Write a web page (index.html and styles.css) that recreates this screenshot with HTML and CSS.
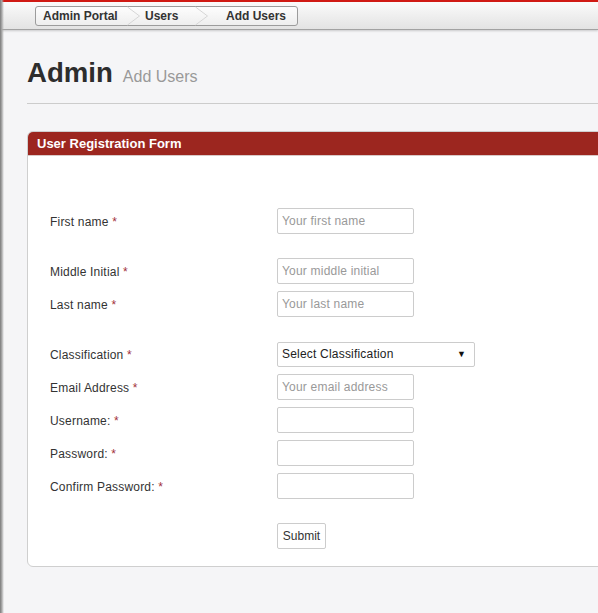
FILE: index.html
```html
<!DOCTYPE html>
<html lang="en">
<head>
<meta charset="utf-8">
<title>Admin - Add Users</title>
<link rel="stylesheet" href="styles.css">
</head>
<body>
<div class="page">
  <header class="topbar">
    <nav class="crumbs">
      <span class="crumb crumb--home">Admin Portal</span>
      <svg class="sep" width="13" height="20" viewBox="0 0 13 20"><polyline points="0.5,1 12.5,10 0.5,19" fill="none" stroke="#d6d6d6" stroke-width="1"/></svg>
      <span class="crumb crumb--users">Users</span>
      <svg class="sep sep--wide" width="13" height="20" viewBox="0 0 13 20"><polyline points="0.5,1 12.5,10 0.5,19" fill="none" stroke="#d6d6d6" stroke-width="1"/></svg>
      <span class="crumb">Add Users</span>
    </nav>
  </header>
  <main class="content">
    <div class="title">
      <h1 class="title-main">Admin</h1>
      <span class="title-sub">Add Users</span>
    </div>
    <hr class="rule">
    <section class="panel">
      <h2 class="panel-head">User Registration Form</h2>
      <form class="panel-body">
        <div class="row row--spaced">
          <label class="label">First name <span class="req">*</span></label>
          <input class="field" type="text" placeholder="Your first name">
        </div>
        <div class="row">
          <label class="label">Middle Initial <span class="req">*</span></label>
          <input class="field" type="text" placeholder="Your middle initial">
        </div>
        <div class="row row--spaced">
          <label class="label">Last name <span class="req">*</span></label>
          <input class="field" type="text" placeholder="Your last name">
        </div>
        <div class="row">
          <label class="label">Classification <span class="req">*</span></label>
          <div class="select">
            <span class="select-text">Select Classification</span>
            <span class="select-arrow">▼</span>
          </div>
        </div>
        <div class="row">
          <label class="label">Email Address <span class="req">*</span></label>
          <input class="field" type="text" placeholder="Your email address">
        </div>
        <div class="row">
          <label class="label">Username: <span class="req">*</span></label>
          <input class="field" type="text">
        </div>
        <div class="row">
          <label class="label">Password: <span class="req">*</span></label>
          <input class="field" type="password">
        </div>
        <div class="row row--spaced">
          <label class="label">Confirm Password: <span class="req">*</span></label>
          <input class="field" type="password">
        </div>
        <div class="row row--last">
          <span class="label"></span>
          <button class="submit" type="button">Submit</button>
        </div>
      </form>
    </section>
  </main>
</div>
</body>
</html>
```

FILE: styles.css
```css
html, body {
  margin: 0;
  padding: 0;
  height: 100%;
}
body {
  background: #f5f5f7;
  font-family: "Liberation Sans", Arial, sans-serif;
  color: #333;
  overflow: hidden;
}
.page {
  position: relative;
  min-height: 100%;
  overflow: hidden;
}
.page::before {
  content: "";
  position: absolute;
  left: 0;
  top: 0;
  bottom: 0;
  width: 4px;
  background: linear-gradient(to right, #7a7a7a, #a9a9a9 45%, rgba(200,200,200,0));
  z-index: 5;
}
.topbar {
  box-sizing: content-box;
  height: 23px;
  padding-top: 4px;
  border-top: 2px solid #d01a14;
  border-bottom: 1px solid #a2a2a2;
  background: linear-gradient(#fbfbfb, #e3e3e3);
  box-shadow: 0 1px 2px rgba(0,0,0,0.18);
}
.crumbs {
  display: inline-flex;
  align-items: center;
  margin-left: 35px;
  height: 18px;
  padding: 0 11px 0 7px;
  border: 1px solid #9c9c9c;
  border-radius: 3px;
  background: linear-gradient(#fdfdfd, #eeeeee);
  font-size: 12px;
  font-weight: bold;
  color: #333;
}
.crumb {
  line-height: 18px;
}
.crumb--home {
  width: 84px;
}
.crumb--users {
  width: 50px;
}
.sep {
  display: block;
  flex: none;
  margin-right: 5px;
}
.sep--wide {
  margin-right: 18px;
}
.content {
  padding: 27px 0 0 27px;
}
.title {
  display: flex;
  align-items: baseline;
  gap: 10px;
  height: 31px;
}
.title-main {
  margin: 0;
  font-size: 27.6px;
  line-height: 31px;
  font-weight: bold;
  color: #2d2d2d;
}
.title-sub {
  font-size: 16px;
  color: #999;
}
.rule {
  margin: 15px 0 0 0;
  border: 0;
  border-top: 1px solid #cccccc;
  height: 0;
}
.panel {
  margin-top: 27px;
  width: 660px;
  border: 1px solid #cfcfcf;
  border-radius: 6px;
  background: #fff;
  overflow: hidden;
}
.panel-head {
  margin: 0;
  height: 23px;
  line-height: 23px;
  padding-left: 9px;
  background: #9c261f;
  border-bottom: 1px solid #d9c9c7;
  color: #fff;
  font-size: 13px;
  font-weight: bold;
}
.panel-body {
  display: flex;
  flex-direction: column;
  gap: 7px;
  padding: 52px 0 17px 22px;
  margin: 0;
}
.row {
  display: flex;
  align-items: center;
  height: 26px;
}
.row--spaced {
  margin-bottom: 17px;
}
.label {
  width: 227px;
  padding-top: 2px;
  font-size: 12px;
  letter-spacing: 0.2px;
  color: #333;
}
.req {
  color: #a2313a;
}
.field {
  box-sizing: border-box;
  width: 137px;
  height: 26px;
  margin: 0;
  padding: 0 4px;
  border: 1px solid #cccccc;
  border-radius: 2px;
  background: #fff;
  font-family: "Liberation Sans", Arial, sans-serif;
  font-size: 12px;
  letter-spacing: 0.2px;
  color: #333;
  outline: none;
}
.field::placeholder {
  color: #999;
}
.select {
  box-sizing: border-box;
  display: flex;
  align-items: center;
  justify-content: space-between;
  width: 198px;
  height: 25px;
  padding: 0 8px 0 4px;
  border: 1px solid #cccccc;
  border-radius: 2px;
  background: #fff;
  font-size: 12px;
  letter-spacing: 0.2px;
  color: #222;
}
.select-arrow {
  font-size: 9px;
  color: #111;
}
.submit {
  box-sizing: border-box;
  width: 49px;
  height: 26px;
  margin: 0;
  padding: 0;
  border: 1px solid #cccccc;
  border-radius: 2px;
  background: #fff;
  font-family: "Liberation Sans", Arial, sans-serif;
  font-size: 12px;
  color: #333;
}
```
